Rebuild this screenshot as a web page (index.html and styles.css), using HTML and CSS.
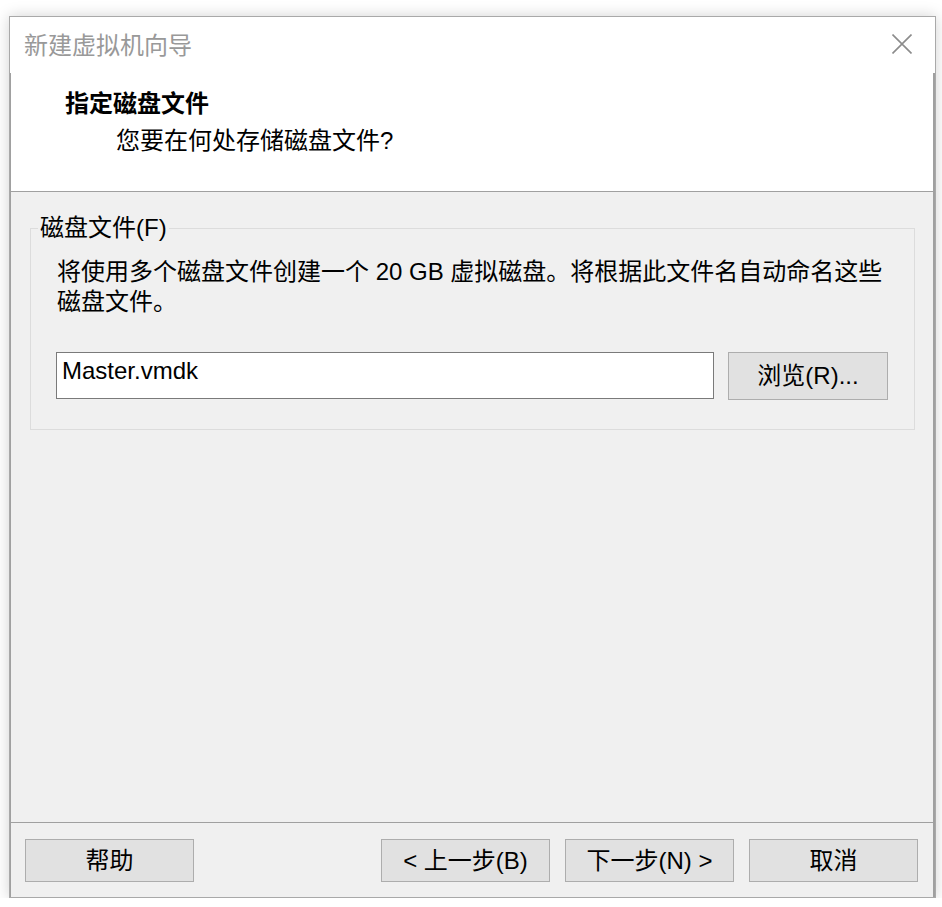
FILE: index.html
```html
<!DOCTYPE html>
<html lang="zh-CN">
<head>
    <meta charset="UTF-8">
    <title>新建虚拟机向导</title>
    <link rel="stylesheet" href="styles.css">
</head>
<body>
<div class="window">
    <div class="titlebar">
        <span class="title">新建虚拟机向导</span>
        <svg class="close" width="20" height="20" viewBox="0 0 20 20">
            <path d="M0.5 0.5L19.5 19.5M19.5 0.5L0.5 19.5" stroke="#8c8c8c" stroke-width="1.6" fill="none"/>
        </svg>
    </div>
    <div class="client">
        <div class="header">
            <h1>指定磁盘文件</h1>
            <p class="sub">您要在何处存储磁盘文件?</p>
        </div>
        <div class="main">
            <fieldset class="group">
                <legend>磁盘文件(F)</legend>
                <p class="desc">将使用多个磁盘文件创建一个 20 GB 虚拟磁盘。将根据此文件名自动命名这些<br>磁盘文件。</p>
                <div class="row">
                    <div class="input">Master.vmdk</div>
                    <div class="btn browse">浏览(R)...</div>
                </div>
            </fieldset>
        </div>
        <div class="footer">
            <div class="btn">帮助</div>
            <div class="nav">
                <div class="btn">&lt; 上一步(B)</div>
                <div class="btn">下一步(N) &gt;</div>
                <div class="btn">取消</div>
            </div>
        </div>
    </div>
</div>
</body>
</html>
```
FILE: styles.css
```css
body{margin:0;padding:16px 0 0 9px;background:#fff;font-family:"Liberation Sans","Noto Sans CJK SC",sans-serif;font-size:24px;color:#000;}
.window{width:927px;box-sizing:border-box;border:1px solid #a9a9a9;box-shadow:0 0 14px rgba(0,0,0,.18);background:#fff;}
.titlebar{height:56px;display:flex;align-items:center;justify-content:space-between;padding:2px 23px 0 14px;box-sizing:border-box;}
.title{color:#999;line-height:30px;}
.close{display:block;margin-top:-4px;}
.client{border-left:1px solid #a0a0a0;border-right:2px solid #a0a0a0;background:#f0f0f0;}
.header{height:119px;box-sizing:border-box;background:#fff;border-bottom:1px solid #a0a0a0;padding:16px 0 0 54px;}
.header h1{margin:0;font-size:24px;font-weight:bold;line-height:30px;}
.header .sub{margin:7px 0 0 51px;line-height:30px;}
.main{height:630px;box-sizing:border-box;padding:21px 18px 0 19px;}
.group{margin:0;padding:0 26px 29px 0;border:1px solid #dcdcdc;}
.group legend{margin-left:7px;padding:0 2px;line-height:30px;}
.desc{margin:14px 0 0 26px;line-height:30px;white-space:nowrap;}
.row{display:flex;gap:14px;margin:35px 0 0 25px;}
.input{width:658px;height:47px;box-sizing:border-box;border:1px solid #7a7a7a;background:#fff;padding:3px 0 0 5px;line-height:30px;}
.btn{width:169px;height:43px;box-sizing:border-box;border:1px solid #adadad;background:#e1e1e1;display:flex;align-items:center;justify-content:center;line-height:30px;}
.browse{width:160px;height:48px;}
.footer{height:75px;box-sizing:border-box;border-top:1px solid #a0a0a0;display:flex;justify-content:space-between;padding:16px 15px 0 14px;}
.nav{display:flex;gap:15px;}
```
